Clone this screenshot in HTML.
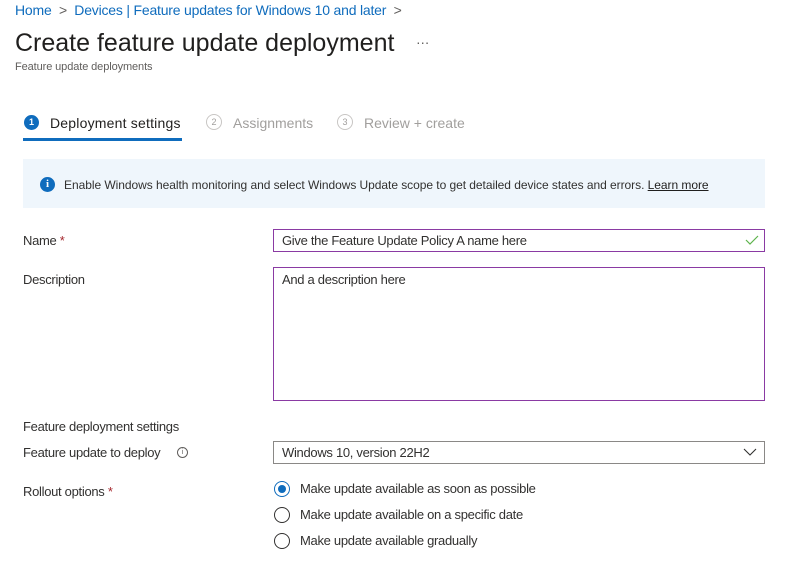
<!DOCTYPE html>
<html><head><style>
body{margin:0;width:793px;height:584px;background:#fff;font-family:"Liberation Sans",sans-serif;color:#323130;position:relative;overflow:hidden}
.a{position:absolute;white-space:nowrap;font-size:13px;letter-spacing:-0.3px}
.box{position:absolute;border:1px solid #8a3aa3;box-sizing:border-box;background:#fff}
.r{position:absolute;width:16px;height:16px;border:1px solid #323130;border-radius:50%;box-sizing:border-box;left:274px}
</style></head><body>
<div class="a" style="left:15px;top:2px;font-size:14px;color:#0f6cbd;letter-spacing:-0.2px">Home <span style="color:#605e5c">&nbsp;&gt;&nbsp;</span> Devices | Feature updates for Windows 10 and later <span style="color:#605e5c">&nbsp;&gt;</span></div>
<div class="a" style="left:15px;top:29px;font-size:25px;color:#201f1e;letter-spacing:0px">Create feature update deployment</div>
<div class="a" style="left:416px;top:34px;font-size:14px;color:#605e5c">···</div>
<div class="a" style="left:15px;top:61px;font-size:11px;color:#605e5c;letter-spacing:-0.1px">Feature update deployments</div>

<div style="position:absolute;left:24px;top:115px;width:15px;height:15px;border-radius:50%;background:#0f6cbd;color:#fff;font-size:9px;text-align:center;line-height:15px;font-weight:bold">1</div>
<div class="a" style="left:50px;top:115px;font-size:14px;color:#201f1e;letter-spacing:0.2px">Deployment settings</div>
<div style="position:absolute;left:23px;top:138px;width:159px;height:3px;background:#0f6cbd"></div>
<div style="position:absolute;left:206px;top:114px;width:16px;height:16px;border:1px solid #c8c6c4;border-radius:50%;box-sizing:border-box;color:#a19f9d;font-size:9px;text-align:center;line-height:14px">2</div>
<div class="a" style="left:233px;top:115px;font-size:14px;color:#a19f9d;letter-spacing:0px">Assignments</div>
<div style="position:absolute;left:337px;top:114px;width:16px;height:16px;border:1px solid #c8c6c4;border-radius:50%;box-sizing:border-box;color:#a19f9d;font-size:9px;text-align:center;line-height:14px">3</div>
<div class="a" style="left:364px;top:115px;font-size:14px;color:#a19f9d;letter-spacing:0px">Review + create</div>

<div style="position:absolute;left:23px;top:159px;width:742px;height:49px;background:#eff6fc"></div>
<div style="position:absolute;left:40px;top:177px;width:15px;height:15px;border-radius:50%;background:#0f6cbd;color:#fff;font-size:11px;font-weight:bold;text-align:center;line-height:15px;font-family:'Liberation Serif',serif">i</div>
<div class="a" style="left:64px;top:178px;font-size:12px;color:#323130;letter-spacing:-0.05px">Enable Windows health monitoring and select Windows Update scope to get detailed device states and errors. <span style="text-decoration:underline;color:#201f1e">Learn more</span></div>

<div class="a" style="left:23px;top:233px">Name <span style="color:#a4262c">*</span></div>
<div class="box" style="left:273px;top:229px;width:492px;height:23px"></div>
<div class="a" style="left:282px;top:233px">Give the Feature Update Policy A name here</div>
<svg style="position:absolute;left:745px;top:234px" width="14" height="12"><path d="M1 6 L5 10 L13 2" stroke="#5db34c" stroke-width="1.2" fill="none"/></svg>

<div class="a" style="left:23px;top:272px">Description</div>
<div class="box" style="left:273px;top:267px;width:492px;height:134px"></div>
<div class="a" style="left:282px;top:272px">And a description here</div>

<div class="a" style="left:23px;top:419px">Feature deployment settings</div>
<div class="a" style="left:23px;top:445px">Feature update to deploy</div>
<div style="position:absolute;left:177px;top:447px;width:11px;height:11px;border:1px solid #605e5c;border-radius:50%;box-sizing:border-box;font-size:7px;text-align:center;line-height:9px;color:#605e5c">i</div>
<div class="box" style="left:273px;top:441px;width:492px;height:23px;border-color:#8a8886"></div>
<div class="a" style="left:282px;top:445px">Windows 10, version 22H2</div>
<svg style="position:absolute;left:743px;top:447px" width="14" height="10"><path d="M1 2 L7 8 L13 2" stroke="#323130" stroke-width="1.1" fill="none"/></svg>

<div class="a" style="left:23px;top:484px">Rollout options <span style="color:#a4262c">*</span></div>
<div class="r" style="top:481px;border-color:#0f6cbd"><div style="position:absolute;left:3px;top:3px;width:8px;height:8px;border-radius:50%;background:#0f6cbd"></div></div>
<div class="a" style="left:300px;top:481px">Make update available as soon as possible</div>
<div class="r" style="top:507px"></div>
<div class="a" style="left:300px;top:507px">Make update available on a specific date</div>
<div class="r" style="top:533px"></div>
<div class="a" style="left:300px;top:533px">Make update available gradually</div>
</body></html>
